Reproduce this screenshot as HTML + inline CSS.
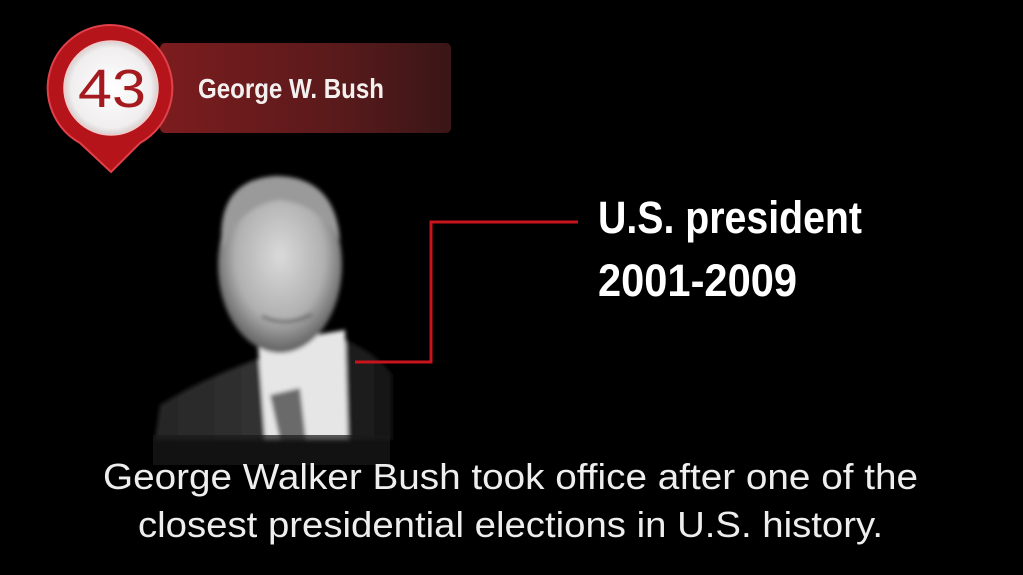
<!DOCTYPE html>
<html><head><meta charset="utf-8"><style>
html,body{margin:0;padding:0;background:#000;width:1023px;height:575px;overflow:hidden}
svg{display:block}
</style></head><body>
<svg width="1023" height="575" viewBox="0 0 1023 575" xmlns="http://www.w3.org/2000/svg">
<defs>
<linearGradient id="ban" x1="0" x2="1" y1="0" y2="0">
<stop offset="0" stop-color="#7c1c1e"/><stop offset="0.6" stop-color="#5a1a1b"/><stop offset="1" stop-color="#3a1617"/>
</linearGradient>
<radialGradient id="face" cx="0.5" cy="0.45" r="0.6">
<stop offset="0" stop-color="#dadada"/><stop offset="0.6" stop-color="#b0b0b0"/><stop offset="1" stop-color="#4a4a4a"/>
</radialGradient>
<radialGradient id="inner" cx="0.5" cy="0.5" r="0.5">
<stop offset="0" stop-color="#ffffff"/><stop offset="0.85" stop-color="#f0eeee"/><stop offset="1" stop-color="#d8d0d0"/>
</radialGradient>
<linearGradient id="suit" x1="0" x2="1"><stop offset="0" stop-color="#262626"/><stop offset="0.5" stop-color="#333"/><stop offset="1" stop-color="#151515"/></linearGradient>
<filter id="blur"><feGaussianBlur stdDeviation="2"/></filter>
</defs>

<rect x="160" y="43" width="291" height="90" rx="5" fill="url(#ban)"/>
<text x="198" y="98" font-family="Liberation Sans, sans-serif" font-weight="bold" font-size="28" fill="#f4f0f0" textLength="186" lengthAdjust="spacingAndGlyphs">George W. Bush</text>

<path d="M110 25 A63 63 0 0 1 140 143 L111 172 L80 143 A63 63 0 0 1 110 25 Z" fill="#b5141b" stroke="#e0404a" stroke-width="2"/>
<circle cx="111" cy="88" r="47" fill="url(#inner)" stroke="#f6c8c8" stroke-width="1.5"/>
<text x="112" y="107" text-anchor="middle" font-family="Liberation Sans, sans-serif" font-size="54" fill="#a51a1e" textLength="68" lengthAdjust="spacingAndGlyphs">43</text>

<g filter="url(#blur)">
<path d="M155 440 L160 405 Q200 380 255 360 L345 340 Q380 355 392 375 L392 440 Z" fill="url(#suit)"/>
<path d="M258 345 L345 330 L348 440 L265 440 Z" fill="#e6e6e6"/>
<path d="M270 395 L300 388 L306 440 L280 440 Z" fill="#6a6a6a"/>
<ellipse cx="280" cy="265" rx="62" ry="88" fill="url(#face)"/>
<path d="M222 250 Q215 180 275 176 Q335 176 340 240 Q320 205 280 200 Q240 205 222 250 Z" fill="#9a9a9a"/>
<path d="M262 316 Q285 328 312 314" stroke="#666" stroke-width="3" fill="none"/>
</g>
<rect x="153" y="435" width="237" height="30" fill="#1a1a1a" opacity="0.7"/>

<path d="M355 362 L431 362 L431 222 L578 222" stroke="#c8141c" stroke-width="3" fill="none"/>

<text x="598" y="233" font-family="Liberation Sans, sans-serif" font-weight="bold" font-size="45" fill="#fff" textLength="264" lengthAdjust="spacingAndGlyphs">U.S. president</text>
<text x="598" y="296" font-family="Liberation Sans, sans-serif" font-weight="bold" font-size="45" fill="#fff" textLength="199" lengthAdjust="spacingAndGlyphs">2001-2009</text>

<text x="103" y="489" font-family="Liberation Sans, sans-serif" font-size="36" fill="#eee" textLength="815" lengthAdjust="spacingAndGlyphs">George Walker Bush took office after one of the</text>
<text x="138" y="537" font-family="Liberation Sans, sans-serif" font-size="36" fill="#eee" textLength="745" lengthAdjust="spacingAndGlyphs">closest presidential elections in U.S. history.</text>
</svg>
</body></html>
